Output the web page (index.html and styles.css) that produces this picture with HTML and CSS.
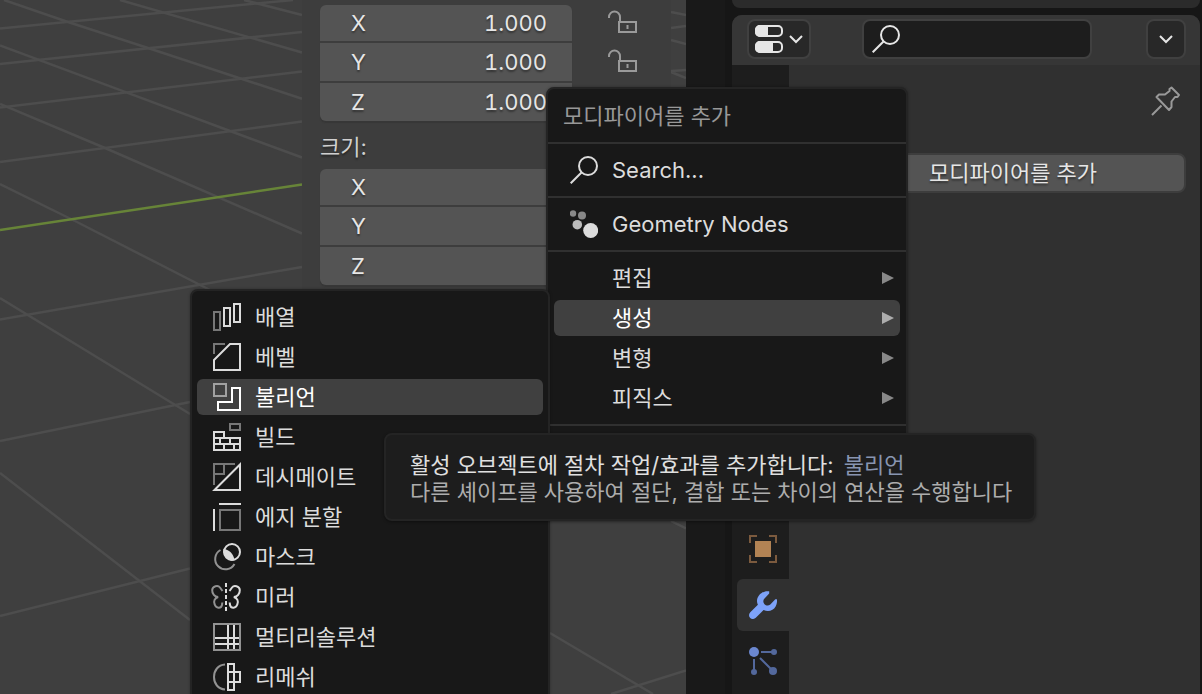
FILE: index.html
```html
<!DOCTYPE html>
<html lang="ko">
<head>
<meta charset="utf-8">
<meta name="viewport" content="width=device-width, initial-scale=1">
<title>모디파이어를 추가</title>
<link rel="stylesheet" href="styles.css">
</head>
<body>
<main class="workspace">
  <section class="viewport" aria-label="3D">
    <svg class="viewport-grid" width="686" height="694" viewBox="0 0 686 694" fill="none" stroke="#4d4d4d" stroke-width="2.500" aria-hidden="true">
      <path d="M0 28.5L293 0M0 64L302 32M0 107.500L302 71.500M0 162L302 121.500M0 319.500L302 267M0 441L190 402M0 616L190 568.500M611 694L686 670.500"/>
      <path d="M4 0L68 22L148 48L242 79L302 98.700M0 45.500L127 92.700L230 131L302 157.500M0 104L105 148L302 233.500M0 184L73 220L210 290M120 0L302 52.500M244 0L302 15M0 298L190 414M0 473L190 620M550 633L653 694M671 521L686 528.500"/>
      <path d="M671 12L686 15M671 28L686 26M671 40L686 44M671 71L686 70M671 72L686 78"/>
      <path d="M0 230L302 184.500" stroke="#678438"/>
    </svg>
    <aside class="sidebar">
      <div class="field-row">
        <div class="fields">
          <label class="field"><span>X</span><input type="text" value="1.000"></label>
          <label class="field"><span>Y</span><input type="text" value="1.000"></label>
          <label class="field"><span>Z</span><input type="text" value="1.000"></label>
        </div>
        <div class="locks">
          <button class="lock" aria-label="X 잠금"><svg width="30" height="24" viewBox="0 0 30 24" fill="none" stroke="#9a9a9a" stroke-width="2"><path d="M2 8V7a5.500 5.500 0 0 1 11 0v4"/><path d="M12 12h17v10H12z"/><path d="M20.500 15v4"/></svg></button>
          <button class="lock" aria-label="Y 잠금"><svg width="30" height="24" viewBox="0 0 30 24" fill="none" stroke="#9a9a9a" stroke-width="2"><path d="M2 8V7a5.500 5.500 0 0 1 11 0v4"/><path d="M12 12h17v10H12z"/><path d="M20.500 15v4"/></svg></button>
        </div>
      </div>
      <div class="field-title">크기:</div>
      <div class="field-row">
        <div class="fields">
          <label class="field"><span>X</span><input type="text"></label>
          <label class="field"><span>Y</span><input type="text"></label>
          <label class="field"><span>Z</span><input type="text"></label>
        </div>
      </div>
    </aside>
  </section>

  <div class="gutter"></div>

  <section class="properties">
    <div class="editor-above"></div>
    <div class="editor">
      <header class="editor-header">
        <button class="header-button editor-type" aria-label="에디터 유형">
          <svg width="28" height="28" viewBox="0 0 28 28" fill="none" stroke="#e6e6e6" stroke-width="2"><rect x="1" y="1" width="26" height="10" rx="4"/><path d="M12 1H5a4 4 0 0 0-4 4v2a4 4 0 0 0 4 4h7z" fill="#e6e6e6"/><rect x="1" y="17" width="26" height="10" rx="4"/><path d="M17 17H5a4 4 0 0 0-4 4v2a4 4 0 0 0 4 4h12z" fill="#e6e6e6"/></svg>
          <svg width="14" height="10" viewBox="0 0 14 10" fill="none" stroke="#e6e6e6" stroke-width="2"><path d="M1 2l6 6 6-6"/></svg>
        </button>
        <label class="search">
          <svg width="28" height="28" viewBox="0 0 28 28" fill="none" stroke="#e6e6e6" stroke-width="2"><circle cx="18" cy="10" r="9"/><path d="M11.500 16.500L.700 27.300"/></svg>
          <input type="text" aria-label="검색">
        </label>
        <button class="header-button options" aria-label="옵션"><svg width="14" height="10" viewBox="0 0 14 10" fill="none" stroke="#e6e6e6" stroke-width="2"><path d="M1 2l6 6 6-6"/></svg></button>
      </header>
      <div class="editor-body">
        <nav class="tabs">
          <button class="tab" aria-label="오브젝트"><svg width="28" height="28" viewBox="0 0 28 28" fill="none" stroke="#7b5a3e" stroke-width="2"><path d="M1 8V1h7M20 1h7v7M27 20v7h-7M8 27H1v-7"/><path d="M6 6h16v16H6z" fill="#b28354" stroke="none"/></svg></button>
          <button class="tab tab-active" aria-label="모디파이어"><svg width="28" height="28" viewBox="0 0 28 28" fill="#7da2f8"><path d="M20.200.300C14 -.800 8.300 4 8 9.500c0 1.800.300 2.800.900 4.200L1.300 21.200C-.500 23-.300 25.500 1.200 26.900c1.600 1.500 4 1.500 5.600-.100L14.600 19c5 2.200 9.700.400 12-3.600 1.300-2.200 1.700-4.900 1.300-7.200h-1.600l-5 5.300c-1.700 1.500-4.300 1.300-5.800-.300-1.600-1.600-1.600-4.300 0-5.800l4.700-4.800z"/></svg></button>
          <button class="tab" aria-label="파티클"><svg width="28" height="28" viewBox="0 0 28 28" fill="#53689c" stroke="#53689c" stroke-width="2"><circle cx="5" cy="5" r="5" fill="#6b87cf" stroke="none"/><path d="M12 5h11M5 12v11M11 11l12 12"/><circle cx="25" cy="5" r="3" stroke="none"/><circle cx="5" cy="25" r="3" stroke="none"/><circle cx="24" cy="24" r="4" stroke="none"/></svg></button>
        </nav>
        <div class="content">
          <button class="pin" aria-label="고정"><svg width="30" height="30" viewBox="0 0 30 30" fill="none" stroke="#999" stroke-width="2" stroke-linejoin="round"><path d="M20.500 1.500l7.500 7.500-1.500 2h-2.500l-3.500 4.500V21l-2.500 3L5.500 11l2.500-2.500h6L18.500 5V3zM10.500 19.500L1 29"/></svg></button>
          <button class="add-modifier">모디파이어를 추가</button>
        </div>
      </div>
    </div>
  </section>
</main>

<div class="menu menu-main" role="menu">
  <div class="menu-title">모디파이어를 추가</div>
  <div class="menu-group">
    <button class="menu-item" role="menuitem"><svg width="28" height="28" viewBox="0 0 28 28" fill="none" stroke="#dcdcdc" stroke-width="2"><circle cx="18" cy="10" r="9"/><path d="M11.500 16.500L.700 27.300"/></svg>Search...</button>
  </div>
  <div class="menu-group">
    <button class="menu-item" role="menuitem"><svg width="28" height="28" viewBox="0 0 28 28"><circle cx="3" cy="3.500" r="3.200" fill="#888"/><circle cx="12" cy="5.500" r="4" fill="#888"/><circle cx="7.300" cy="14.700" r="4.800" fill="#bbb"/><circle cx="20.700" cy="20.500" r="7.500" fill="#dcdcdc"/></svg>Geometry Nodes</button>
  </div>
  <div class="menu-group">
    <button class="menu-item submenu-item" role="menuitem">편집<svg class="arrow" width="12" height="14" viewBox="0 0 12 14"><path d="M0 1l12 6-12 6z"/></svg></button>
    <button class="menu-item submenu-item selected" role="menuitem">생성<svg class="arrow" width="12" height="14" viewBox="0 0 12 14"><path d="M0 1l12 6-12 6z"/></svg></button>
    <button class="menu-item submenu-item" role="menuitem">변형<svg class="arrow" width="12" height="14" viewBox="0 0 12 14"><path d="M0 1l12 6-12 6z"/></svg></button>
    <button class="menu-item submenu-item" role="menuitem">피직스<svg class="arrow" width="12" height="14" viewBox="0 0 12 14"><path d="M0 1l12 6-12 6z"/></svg></button>
  </div>
  <div class="menu-group menu-end"></div>
</div>

<div class="menu menu-generate" role="menu">
  <button class="menu-item" role="menuitem"><svg class="icon" viewBox="0 0 28 28"><path class="dim" d="M1 9h6v18H1z"/><path d="M11 5h6v18h-6zM21 1h6v18h-6z"/></svg>배열</button>
  <button class="menu-item" role="menuitem"><svg class="icon" viewBox="0 0 28 28"><path class="dim" d="M1 11V1h11"/><path d="M1 17L17 1h10v26H1z"/></svg>베벨</button>
  <button class="menu-item selected" role="menuitem"><svg class="icon" viewBox="0 0 28 28"><path class="dim" d="M1 1h12v12H1z"/><path d="M19 5h8v22H5v-8h14z"/></svg>불리언</button>
  <button class="menu-item" role="menuitem"><svg class="icon" viewBox="0 0 28 28"><path class="dim" d="M17 1h10v6H17z"/><path d="M1 27V9h10v6h16v12zM1 15h10M1 21h26M17 15v6M7 15v6M11 21v6M21 21v6"/></svg>빌드</button>
  <button class="menu-item" role="menuitem"><svg class="icon" viewBox="0 0 28 28"><path class="dim" d="M1 22V1h21M11 1v10H1"/><path d="M1.500 27L27 1.500V27z"/></svg>데시메이트</button>
  <button class="menu-item" role="menuitem"><svg class="icon" viewBox="0 0 28 28"><path class="dim" d="M7 7h20v20H7z"/><path d="M6 1h22M1 6v22"/></svg>에지 분할</button>
  <button class="menu-item" role="menuitem"><svg class="icon" viewBox="0 0 28 28"><path class="mid" d="M7.500 7A10.300 10.300 0 1 0 21.500 21"/><circle cx="19" cy="9" r="8"/><path class="solid" d="M10.500 6C15.500 6 21 11 21.500 17.500C14.500 18.500 10 13 10.500 6z"/></svg>마스크</button>
  <button class="menu-item" role="menuitem"><svg class="icon" viewBox="0 0 28 28"><path class="mid" d="M9.500 8L7 4.500C5 2-.500 3-.800 7c-.200 3.500 2.500 7 6 7-3.500 1-5 4-3.500 7.500C3 25.500 8 26 9 22l.300-2.500"/><path d="M16.500 8L19 4.500c2-2.500 7.500-1.500 7.800 2.500.200 3.500-2.500 7-6 7 3.500 1 5 4 3.500 7.500C23 25.500 18 26 17 22l-.300-2.500"/><path d="M13 0v4M13 6v4M13 12v4M13 18v4M13 24v4"/></svg>미러</button>
  <button class="menu-item" role="menuitem"><svg class="icon" viewBox="0 0 28 28"><path class="mid" d="M1 1h26v26H1z"/><path d="M15 2v24M21 2v24M2 15h24M2 21h24"/></svg>멀티리솔루션</button>
  <button class="menu-item" role="menuitem"><svg class="icon" viewBox="0 0 28 28"><path class="mid" d="M12 1.500C5 2 1 7.500 1 14s4 12 11 12.500"/><path d="M15 1h6v26h-6zM15 9h12v10H15M21 9v10"/></svg>리메쉬</button>
</div>

<div class="tooltip" role="tooltip">
  <p class="tooltip-title">활성 오브젝트에 절차 작업/효과를 추가합니다: <span class="tooltip-value">불리언</span></p>
  <p class="tooltip-text">다른 셰이프를 사용하여 절단, 결합 또는 차이의 연산을 수행합니다</p>
</div>
</body>
</html>
```
FILE: styles.css
```css
* {
  box-sizing: border-box;
}

body {
  position: relative;
  height: 100vh;
  margin: 0;
  overflow: hidden;
  background: #161616;
  color: #e0e0e0;
  font: 22px/28px Inter, "Noto Sans CJK KR", sans-serif;
}

button,
input {
  margin: 0;
  padding: 0;
  border: 0;
  background: none;
  color: inherit;
  font: inherit;
  text-shadow: inherit;
}

svg {
  display: block;
  flex: none;
}

.workspace {
  display: grid;
  grid-template-columns: minmax(0, 1fr) 46px 470px;
  height: 100%;
}

/* 3D viewport */
.viewport {
  position: relative;
  display: flex;
  justify-content: flex-end;
  align-items: flex-start;
  padding-right: 15px;
  overflow: hidden;
  background: #3f3f3f;
}

.viewport-grid {
  position: absolute;
  top: 0;
  left: 0;
}

.sidebar {
  position: relative;
  width: 369px;
  padding: 5px 30px 40px 18px;
  background: #3d3d3d;
  text-shadow: 0 2px 2px rgba(0, 0, 0, 0.4);
}

.field-row {
  display: flex;
  gap: 35px;
}

.fields {
  display: flex;
  flex-direction: column;
  gap: 2px;
  width: 252px;
  overflow: hidden;
  border-radius: 6px;
  background: #3d3d3d;
  box-shadow: 0 2px 1px #373737;
}

.field {
  display: flex;
  align-items: center;
  height: 38px;
  padding: 0 25px 0 31px;
  background: #545454;
  color: #e6e6e6;
}

.field:first-child {
  height: 36px;
}

.field input {
  flex: 1;
  width: 100%;
  min-width: 0;
  font-variant-numeric: tabular-nums;
  text-align: right;
}

.field-title {
  padding: 12px 0 8px;
  color: #d0d0d0;
}

.locks {
  display: flex;
  flex-direction: column;
  gap: 15px;
  padding-top: 5px;
}

/* Properties editor */
.gutter {
  border-right: 7px solid #161616;
  background: #191919;
}

.properties {
  display: flex;
  flex-direction: column;
  gap: 7px;
  padding-right: 2px;
}

.editor-above {
  height: 8px;
  border-radius: 0 0 10px 10px;
  background: #2b2b2b;
}

.editor {
  display: flex;
  flex: 1;
  flex-direction: column;
  overflow: hidden;
  border-radius: 10px 10px 0 0;
  background: #303030;
}

.editor-header {
  display: flex;
  align-items: center;
  height: 50px;
  padding: 0 14px 2px 15px;
  background: #363636;
}

.header-button {
  display: flex;
  align-items: center;
  justify-content: center;
  gap: 6px;
  height: 40px;
  border: 2px solid #404040;
  border-radius: 8px;
  background: #282828;
}

.editor-type {
  width: 64px;
}

.search {
  display: flex;
  align-items: center;
  width: 230px;
  height: 40px;
  margin-left: 51px;
  padding: 0 8px;
  border: 2px solid #404040;
  border-radius: 8px;
  background: #1d1d1d;
}

.search input {
  width: 100%;
  min-width: 0;
}

.options {
  width: 40px;
  margin-left: auto;
}

.editor-body {
  display: flex;
  flex: 1;
}

.tabs {
  display: flex;
  flex-direction: column;
  gap: 4px;
  width: 57px;
  padding: 458px 0 0 5px;
  background: #1d1d1d;
}

.tab {
  display: flex;
  align-items: center;
  justify-content: center;
  height: 52px;
  border-radius: 6px 0 0 6px;
}

.tab-active {
  background: #303030;
}

.content {
  display: flex;
  flex: 1;
  flex-direction: column;
  padding: 21px 14px 0 51px;
}

.pin {
  align-self: flex-end;
  margin: 0 5px 37px 0;
}

.add-modifier {
  height: 40px;
  border: 2px solid #3d3d3d;
  border-radius: 8px;
  background: #545454;
  color: #e6e6e6;
  text-shadow: 0 2px 2px rgba(0, 0, 0, 0.4);
}

/* Popup menus */
.menu {
  position: absolute;
  border: 2px solid #242424;
  border-radius: 8px;
  background: #181818;
  box-shadow: 0 0 3px rgba(0, 0, 0, 0.3);
}

.menu-main {
  top: 87px;
  left: 546px;
  width: 362px;
}

.menu-title {
  padding: 13px 15px 12px;
  color: #989898;
}

.menu-group {
  display: flex;
  flex-direction: column;
  gap: 4px;
  padding: 8px 6px;
  border-top: 2px solid #303030;
}

.menu-end {
  height: 60px;
}

.menu-item {
  display: flex;
  flex: none;
  align-items: center;
  gap: 14px;
  height: 36px;
  padding: 0 6px 0 16px;
  border-radius: 6px;
  color: #dcdcdc;
  text-align: left;
}

.submenu-item {
  padding-left: 58px;
}

.arrow {
  margin-left: auto;
  fill: #888;
}

.selected {
  background: #404040;
  color: #fff;
}

.selected .arrow {
  fill: #adadad;
}

.menu-generate {
  top: 289px;
  bottom: -10px;
  left: 190px;
  display: flex;
  flex-direction: column;
  gap: 4px;
  width: 360px;
  padding: 8px 5px;
}

.icon {
  width: 28px;
  height: 28px;
  overflow: visible;
  fill: none;
  stroke: currentColor;
  stroke-width: 2;
}

.icon .dim {
  stroke: #777;
}

.icon .mid {
  stroke: #929292;
}

.icon .solid {
  fill: currentColor;
  stroke: none;
}

.selected .icon .dim {
  stroke: #a0a0a0;
}

.tooltip {
  position: absolute;
  top: 433px;
  left: 384px;
  padding: 17px 22px 13px 24px;
  border: 2px solid #242424;
  border-radius: 8px;
  background: #1d1d1d;
  box-shadow: 0 1px 3px rgba(0, 0, 0, 0.4);
  line-height: 27px;
  white-space: nowrap;
}

.tooltip p {
  margin: 0;
}

.tooltip-text {
  color: #adadad;
}

.tooltip-value {
  margin-left: 4px;
  color: #8895b0;
}
```
